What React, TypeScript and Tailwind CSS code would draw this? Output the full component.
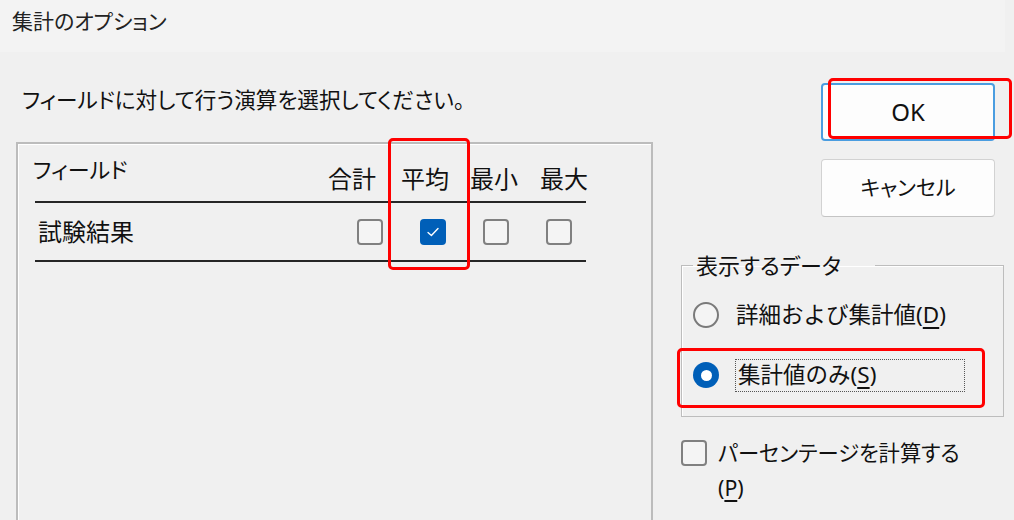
import React from "react";

const font = {
  fontFamily: '"Noto Sans", "Noto Sans CJK JP", sans-serif',
};

function CheckBox({ checked = false }: { checked?: boolean }) {
  if (checked)
    return (
      <div className="w-[26px] h-[26px] rounded-[4px] bg-[#005fb8] flex items-center justify-center shrink-0">
        <svg width="16" height="16" viewBox="0 0 16 16" fill="none">
          <path d="M3 8.6 L6.4 11.6 L13 4.6" stroke="#fff" strokeWidth="1.4" strokeLinecap="round" strokeLinejoin="round" />
        </svg>
      </div>
    );
  return <div className="w-[26px] h-[26px] rounded-[4px] border-2 border-[#808080] bg-[#f4f4f4] shrink-0" />;
}

function Radio({ checked = false }: { checked?: boolean }) {
  if (checked)
    return (
      <div className="w-[26px] h-[26px] rounded-full bg-[#005fb8] flex items-center justify-center shrink-0">
        <div className="w-[11px] h-[11px] rounded-full bg-white" />
      </div>
    );
  return <div className="w-[26px] h-[26px] rounded-full border-2 border-[#7a7a7a] bg-[#f4f4f4] shrink-0" />;
}

export default function App() {
  return (
    <div
      className="relative w-[1014px] h-[520px] overflow-hidden bg-[#f0f0f0] text-[#111] [font-feature-settings:'palt']"
      style={font}
    >
      {/* Title bar */}
      <div className="w-[1005px] h-[52px] bg-[#f3f3f3] flex items-center pl-[12px] text-[21px] text-[#222] pb-[8px]">
        集計のオプション
      </div>

      <div className="flex">
        {/* Left column */}
        <div className="w-[653px] shrink-0">
          <p className="pl-[22px] pt-[33px] text-[21.6px] leading-[30px]">
            フィールドに対して行う演算を選択してください。
          </p>

          <div className="mt-[27px] ml-[16px] h-[420px] border-2 border-[#bcbcbc] shadow-[inset_1px_1px_0_#fff] pl-[17px] pr-[65px] text-[24px]">
            {/* Header */}
            <div className="flex h-[59px] border-b-2 border-[#262626]">
              <span className="pt-[10px] leading-[30px] -ml-[2px] text-[22px]">フィールド</span>
              <div className="ml-auto flex self-end pb-[7px] leading-[30px] -mr-[2px]">
                <span>合計</span>
                <span className="ml-[25px]">平均</span>
                <span className="ml-[21px]">最小</span>
                <span className="ml-[22px]">最大</span>
              </div>
            </div>
            {/* Row */}
            <div className="flex items-center h-[59px] border-b-2 border-[#262626]">
              <span className="pl-[3px] leading-[30px]">試験結果</span>
              <div className="ml-auto flex gap-[37px] pr-[14px]">
                <CheckBox />
                <CheckBox checked />
                <CheckBox />
                <CheckBox />
              </div>
            </div>
          </div>
        </div>

        {/* Right column */}
        <div className="w-[352px] pl-[28px] text-[22px]">
          <div className="ml-[140px] w-[174px] flex flex-col gap-[18px] mt-[31px]">
            <button className="h-[58px] rounded-[4px] bg-[#fdfdfd] border-2 border-[#4a9de0] text-[24px]">
              OK
            </button>
            <button className="h-[58px] rounded-[4px] bg-[#fdfdfd] border border-[#d2d2d2] border-b-[#c4c4c4] text-[21px]">
              キャンセル
            </button>
          </div>

          <fieldset className="mt-[33px] w-[323px] h-[167px] border border-[#bdbdbd] shadow-[inset_1px_1px_0_#fff] pl-[11px]">
            <legend className="pl-[3px] pr-[34px] leading-[30px] text-[22px]">
              表示するデータ
            </legend>
            <div className="flex items-center h-[40px] mt-[15px] [font-feature-settings:normal] text-[22.5px]">
              <Radio />
              <span className="ml-[14px] border border-transparent px-[2px] leading-[30px]">
                詳細および集計値(<span className="underline underline-offset-4">D</span>)
              </span>
            </div>
            <div className="flex items-center h-[40px] mt-[20px] [font-feature-settings:normal] text-[22.5px]">
              <Radio checked />
              <span className="ml-[16px] w-[230px] h-[33px] border border-dotted border-[#555] px-[2px] leading-[30px]">
                集計値のみ(<span className="underline underline-offset-4">S</span>)
              </span>
            </div>
          </fieldset>

          <div className="flex items-start mt-[18px]">
            <div className="mt-[5px]">
              <CheckBox />
            </div>
            <span className="ml-[11px] leading-[35px] text-[21.3px]">
              パーセンテージを計算する
              <br />(<span className="underline underline-offset-4">P</span>)
            </span>
          </div>
        </div>
      </div>

      {/* Red highlight annotations */}
      <div className="absolute left-[388px] top-[138px] w-[82px] h-[132px] border-[3px] border-[#ff0000] rounded-[5px]" />
      <div className="absolute left-[828px] top-[78px] w-[184px] h-[61px] border-[3px] border-[#ff0000] rounded-[5px]" />
      <div className="absolute left-[677px] top-[348px] w-[308px] h-[60px] border-[3px] border-[#ff0000] rounded-[5px]" />
    </div>
  );
}
